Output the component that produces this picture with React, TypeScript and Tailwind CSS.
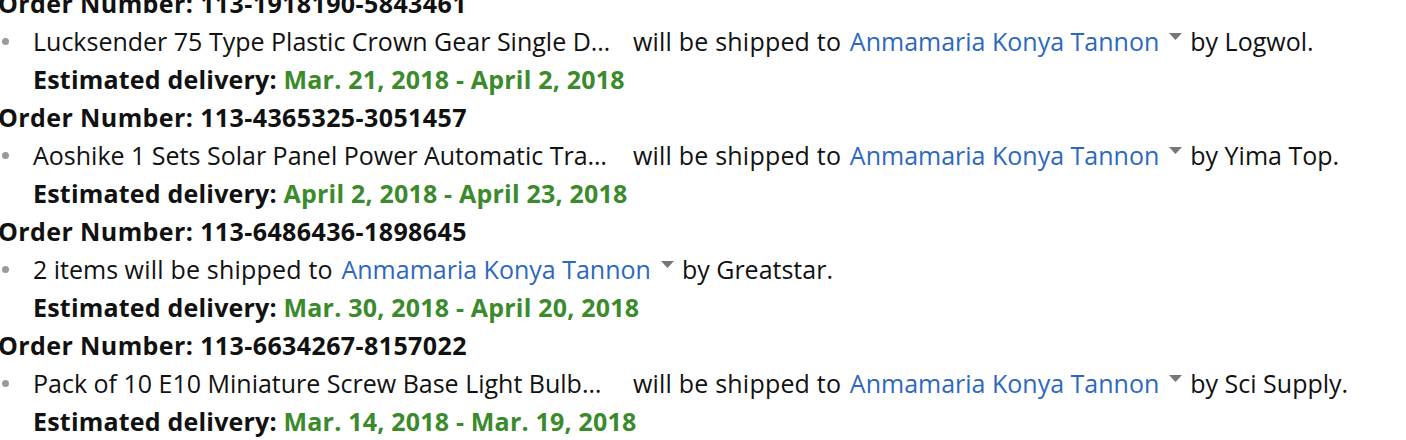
const orders = [
  {
    number: "113-1918190-5843461",
    lead: "Lucksender 75 Type Plastic Crown Gear Single D…",
    seller: "Logwol.",
    delivery: "Mar. 21, 2018 - April 2, 2018",
  },
  {
    number: "113-4365325-3051457",
    lead: "Aoshike 1 Sets Solar Panel Power Automatic Tra…",
    seller: "Yima Top.",
    delivery: "April 2, 2018 - April 23, 2018",
  },
  {
    number: "113-6486436-1898645",
    lead: null,
    seller: "Greatstar.",
    delivery: "Mar. 30, 2018 - April 20, 2018",
  },
  {
    number: "113-6634267-8157022",
    lead: "Pack of 10 E10 Miniature Screw Base Light Bulb…",
    seller: "Sci Supply.",
    delivery: "Mar. 14, 2018 - Mar. 19, 2018",
  },
];

function Caret() {
  return (
    <svg width="13" height="8" viewBox="0 0 13 8" className="inline-block ml-[10px] mr-[8px] mb-[8px] shrink-0">
      <path d="M0 0 L13 0 L6.5 7 Z" fill="#777" />
    </svg>
  );
}

export default function App() {
  return (
    <div
      className="bg-white text-[#111] text-[25px] leading-[38px] overflow-hidden h-[440px] w-[1406px]"
      style={{ fontFamily: '"Open Sans", "Liberation Sans", sans-serif' }}
    >
      <div className="-mt-[16px] -ml-[2px]">
        {orders.map((o) => (
          <div key={o.number}>
            <div className="font-bold whitespace-nowrap tracking-[0.4px]">Order Number: {o.number}</div>
            <div className="flex items-center whitespace-nowrap">
              <span className="w-[35px] flex pl-[4px]">
                <span className="w-[7px] h-[7px] rounded-full bg-[#9a9a9a]" />
              </span>
              {o.lead ? (
                <span className="w-[600px] shrink-0">{o.lead}</span>
              ) : (
                <span>2 items&nbsp;</span>
              )}
              <span className="tracking-[0.2px]">will be shipped to&nbsp;</span>
              <span className="text-[#2d68bf] ml-[2px]">Anmamaria Konya Tannon</span>
              <Caret />
              <span>by {o.seller}</span>
            </div>
            <div className="pl-[35px] whitespace-nowrap font-bold tracking-[0.2px]">
              <span>Estimated delivery: </span>
              <span className="text-[#3b8a2c]">{o.delivery}</span>
            </div>
          </div>
        ))}
      </div>
    </div>
  );
}
